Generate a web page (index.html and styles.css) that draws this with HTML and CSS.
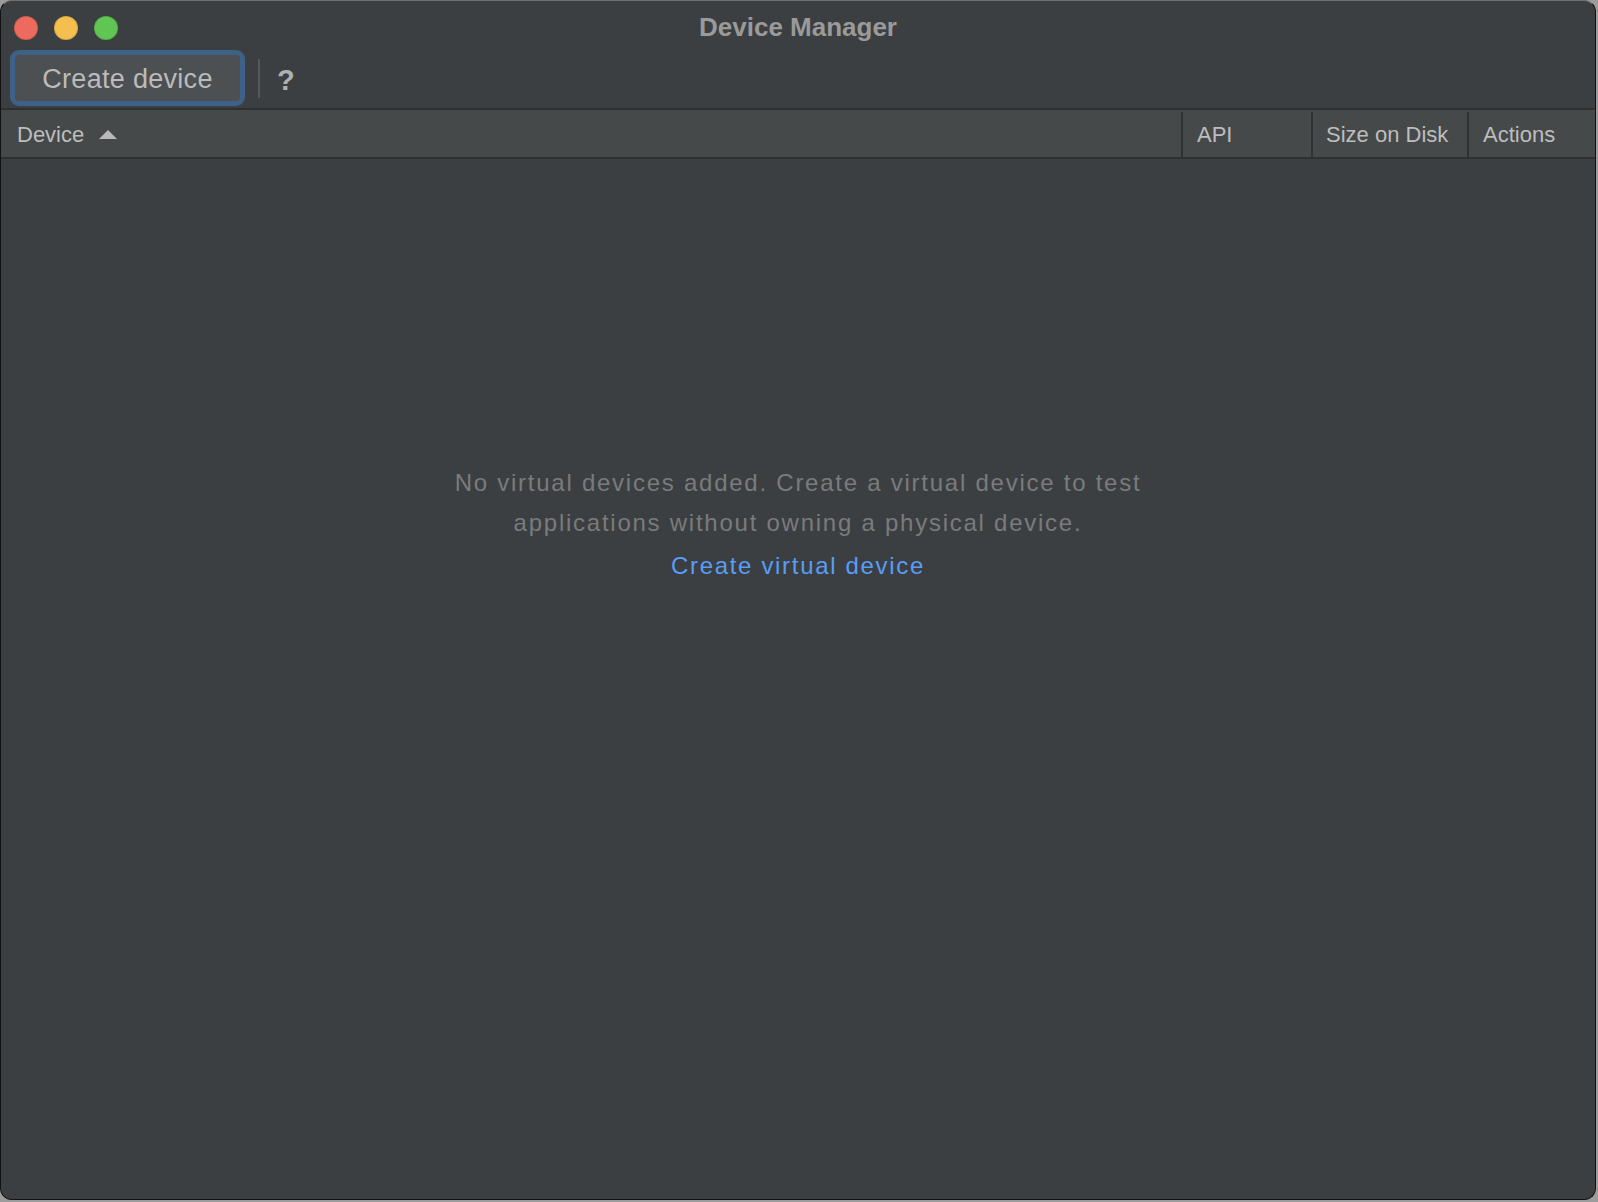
FILE: index.html
```html
<!DOCTYPE html>
<html lang="en">
<head>
<meta charset="utf-8">
<title>Device Manager</title>
<link rel="stylesheet" href="styles.css">
</head>
<body>
<div class="window">
  <div class="titlebar">
    <div class="lights">
      <span class="light red"></span>
      <span class="light yellow"></span>
      <span class="light green"></span>
    </div>
    <div class="title">Device Manager</div>
    <div class="spacer"></div>
  </div>
  <div class="toolbar">
    <button class="btn">Create device</button>
    <span class="sep"></span>
    <span class="help">?</span>
  </div>
  <div class="header">
    <div class="col col-device">Device
      <svg class="sort" width="18" height="9" viewBox="0 0 18 9"><polygon points="0,9 18,9 9,0" fill="#b9b9b9"/></svg>
    </div>
    <div class="col col-api">API</div>
    <div class="col col-size">Size on Disk</div>
    <div class="col col-actions">Actions</div>
  </div>
  <div class="content">
    <p class="msg">No virtual devices added. Create a virtual device to test<br>applications without owning a physical device.</p>
    <a class="link" href="#">Create virtual device</a>
  </div>
</div>
</body>
</html>
```
FILE: styles.css
```css
html, body {
  margin: 0;
  padding: 0;
  background: #9c9c9c;
  width: 1598px;
  height: 1202px;
  overflow: hidden;
}
.window {
  box-sizing: border-box;
  width: 1596px;
  height: 1200px;
  background: #3c3f41;
  border: 1px solid #121212;
  border-top-color: #707070;
  border-radius: 12px;
  display: flex;
  flex-direction: column;
  overflow: hidden;
  font-family: "Liberation Sans", Arial, sans-serif;
}
.titlebar {
  height: 48px;
  flex: none;
  display: grid;
  grid-template-columns: 1fr auto 1fr;
  align-items: start;
}
.lights {
  display: flex;
  gap: 16px;
  padding-left: 13px;
  padding-top: 15px;
}
.light {
  width: 24px;
  height: 24px;
  border-radius: 50%;
  box-sizing: border-box;
  border: 1px solid rgba(0,0,0,0.12);
}
.red { background: #ed6a5e; }
.yellow { background: #f5bf4f; }
.green { background: #61c554; }
.title {
  font-size: 26px;
  font-weight: bold;
  line-height: 42px;
  padding-top: 5px;
  color: #9a9a9a;
}
.toolbar {
  height: 59px;
  flex: none;
  box-sizing: border-box;
  display: flex;
  align-items: center;
  padding-left: 9px;
}
.btn {
  box-sizing: border-box;
  width: 235px;
  height: 56px;
  border: 5px solid #3e6287;
  border-radius: 9px;
  background: #4c5052;
  color: #bbbbbb;
  font-family: "Liberation Sans", Arial, sans-serif;
  font-size: 27px;
  line-height: 46px;
  letter-spacing: 0.3px;
  padding: 0;
  padding-top: 1px;
  text-align: center;
  margin-top: -1px;
}
.sep {
  width: 2px;
  height: 39px;
  background: #55585a;
  margin-left: 13px;
}
.help {
  font-size: 29px;
  font-weight: bold;
  line-height: 30px;
  color: #aeb0b2;
  margin-left: 17px;
  margin-top: 2px;
}
.header {
  flex: none;
  display: grid;
  grid-template-columns: 1180px 130px 156px 1fr;
  background: #45494a;
  border-top: 2px solid #2e3032;
  border-bottom: 2px solid #2e3032;
  padding-top: 2px;
  height: 45px;
  color: #bdbdbd;
  font-size: 22px;
  line-height: 45px;
}
.col {
  box-sizing: border-box;
  height: 45px;
  white-space: nowrap;
}
.col-device {
  padding-left: 16px;
  display: flex;
  align-items: center;
}
.sort {
  margin-left: 15px;
  margin-top: -1px;
}
.col-api, .col-size, .col-actions {
  border-left: 2px solid #2f3234;
}
.col-api { padding-left: 14px; }
.col-size { padding-left: 13px; }
.col-actions { padding-left: 14px; }
.content {
  flex: 1;
  display: flex;
  flex-direction: column;
  align-items: center;
  padding-top: 304px;
  text-align: center;
}
.msg {
  margin: 0;
  font-size: 24px;
  line-height: 40px;
  letter-spacing: 1.75px;
  color: #797b7d;
}
.link {
  margin-top: 3px;
  font-size: 24px;
  line-height: 40px;
  letter-spacing: 1.68px;
  color: #589df6;
  text-decoration: none;
}
```
